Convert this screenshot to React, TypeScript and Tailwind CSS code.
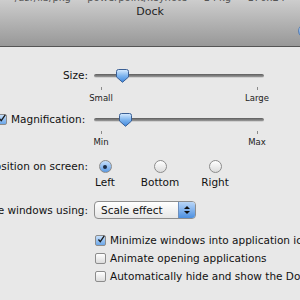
import React from 'react';

const font = { fontFamily: '"DejaVu Sans", "Liberation Sans", sans-serif' };

function Thumb() {
  return (
    <svg width="15" height="14" viewBox="0 0 15 14" className="absolute top-[-5px]" style={{ left: 0 }}>
      <defs>
        <linearGradient id="tb" x1="0" y1="0" x2="0" y2="1">
          <stop offset="0" stopColor="#d9ecff" />
          <stop offset="0.5" stopColor="#7db4ee" />
          <stop offset="1" stopColor="#3e86dc" />
        </linearGradient>
      </defs>
      <path d="M1.5 2.5 Q1.5 0.5 3.5 0.5 L11.5 0.5 Q13.5 0.5 13.5 2.5 L13.5 8 L7.5 13.3 L1.5 8 Z" fill="url(#tb)" stroke="#3a5f94" strokeWidth="1" />
    </svg>
  );
}

function Slider({ pos }: { pos: number }) {
  return (
    <div className="relative w-[170px] h-[4px] rounded-full bg-gradient-to-b from-[#5d5d5d] to-[#9a9a9a] border-b border-[#d0d0d0]">
      <div className="absolute top-0" style={{ left: pos }}>
        <Thumb />
      </div>
    </div>
  );
}

function Ticks({ left, right }: { left: string; right: string }) {
  return (
    <div className="ml-[94px] w-[170px] flex justify-between">
      {[left, right].map((t) => (
        <div key={t} className="w-[14px] flex flex-col items-center">
          <div className="w-px h-[3px] bg-[#8a8a8a]" />
          <div className="mt-[3px] text-[8.5px] leading-[10px] whitespace-nowrap text-[#222]">{t}</div>
        </div>
      ))}
    </div>
  );
}

function Label({ children }: { children: React.ReactNode }) {
  return (
    <div className="w-[88px] shrink-0 flex justify-end">
      <span className="shrink-0 whitespace-nowrap text-[10.5px] leading-[13px] text-[#111]">{children}</span>
    </div>
  );
}

function Check({ on }: { on?: boolean }) {
  return (
    <div
      className={`w-[11px] h-[11px] shrink-0 rounded-[2px] border border-[#8c8c8c] flex items-center justify-center ${
        on ? 'bg-gradient-to-b from-[#c7e0fb] to-[#6aa6e8]' : 'bg-gradient-to-b from-white to-[#dcdcdc]'
      }`}
    >
      {on && (
        <svg width="11" height="11" viewBox="0 0 11 11" className="-mt-[3px] ml-[1px]">
          <path d="M2 5.5 L4.5 8.5 L10 0.5" fill="none" stroke="#1a1a1a" strokeWidth="1.8" />
        </svg>
      )}
    </div>
  );
}

function Radio({ on, label }: { on?: boolean; label: string }) {
  return (
    <div className="w-[34px] flex flex-col items-center">
      <div
        className={`w-[13px] h-[13px] rounded-full border border-[#8c8c8c] flex items-center justify-center ${
          on ? 'bg-gradient-to-b from-[#c7e0fb] to-[#5d9be3]' : 'bg-gradient-to-b from-white to-[#dcdcdc]'
        }`}
      >
        {on && <div className="w-[4px] h-[4px] rounded-full bg-[#1b2b44]" />}
      </div>
      <div className="mt-[3px] whitespace-nowrap text-[10.5px] leading-[13px] text-[#111]">{label}</div>
    </div>
  );
}

export default function App() {
  return (
    <div className="w-[300px] h-[300px] overflow-hidden bg-[#e8e8e8] text-[#111]" style={font}>
      {/* Title bar */}
      <div className="relative flex flex-col h-[47px] bg-gradient-to-b from-[#cdcdcd] to-[#989898] border-b border-[#555]">
        <div className="-mt-[8px] h-[11px] text-center text-[10px] leading-[11px] text-[#555] whitespace-nowrap">
          /usr/lib/pkg — powerpoint/keynote — 1 Pkg — 170x24
        </div>
        <div className="mt-[2px] text-center text-[11px] leading-[14px] text-[#222]">Dock</div>
        <div className="absolute right-[-14px] top-[24px] w-[16px] h-[14px] rounded-full bg-gradient-to-b from-[#d8e8fb] to-[#3d82d8] border border-[#5a7fb0]" />
      </div>

      {/* Size */}
      <div className="mt-[22px] flex items-center h-[13px]">
        <Label>Size:</Label>
        <div className="ml-[6px]">
          <Slider pos={21} />
        </div>
      </div>
      <div className="mt-[5px]">
        <Ticks left="Small" right="Large" />
      </div>

      {/* Magnification */}
      <div className="mt-[10px] flex items-center h-[13px]">
        <div className="w-[88px] shrink-0 flex items-center">
          <div className="-ml-[4px]">
            <Check on />
          </div>
          <span className="ml-[4px] whitespace-nowrap text-[10.5px] leading-[13px]">Magnification:</span>
        </div>
        <div className="ml-[6px]">
          <Slider pos={24} />
        </div>
      </div>
      <div className="mt-[5px]">
        <Ticks left="Min" right="Max" />
      </div>

      {/* Position */}
      <div className="mt-[13px] flex items-start">
        <Label>Position on screen:</Label>
        <div className="flex gap-[21px]">
          <Radio on label="Left" />
          <Radio label="Bottom" />
          <Radio label="Right" />
        </div>
      </div>

      {/* Minimize using */}
      <div className="mt-[12px] flex items-center h-[18px]">
        <Label>Minimize windows using:</Label>
        <div className="ml-[6px] w-[102px] h-[18px] rounded-[4px] border border-[#8e8e8e] bg-gradient-to-b from-white to-[#e6e6e6] flex items-center overflow-hidden">
          <span className="pl-[6px] flex-1 text-[10.5px] leading-[13px] whitespace-nowrap">Scale effect</span>
          <div className="w-[17px] h-full bg-gradient-to-b from-[#b9d6f7] to-[#4c90e0] border-l border-[#6d8fbd] flex flex-col items-center justify-center gap-[2px]">
            <svg width="6" height="3" viewBox="0 0 6 3"><path d="M0 3 L3 0 L6 3 Z" fill="#111" /></svg>
            <svg width="6" height="3" viewBox="0 0 6 3"><path d="M0 0 L3 3 L6 0 Z" fill="#111" /></svg>
          </div>
        </div>
      </div>

      {/* Checkboxes */}
      <div className="mt-[15px] ml-[95px] flex flex-col gap-[5px]">
        {[
          { on: true, t: 'Minimize windows into application icon' },
          { on: false, t: 'Animate opening applications' },
          { on: false, t: 'Automatically hide and show the Dock' },
        ].map((r) => (
          <div key={r.t} className="flex items-center h-[13px]">
            <Check on={r.on} />
            <span className="ml-[4px] whitespace-nowrap text-[10.5px] leading-[13px]">{r.t}</span>
          </div>
        ))}
      </div>
    </div>
  );
}
